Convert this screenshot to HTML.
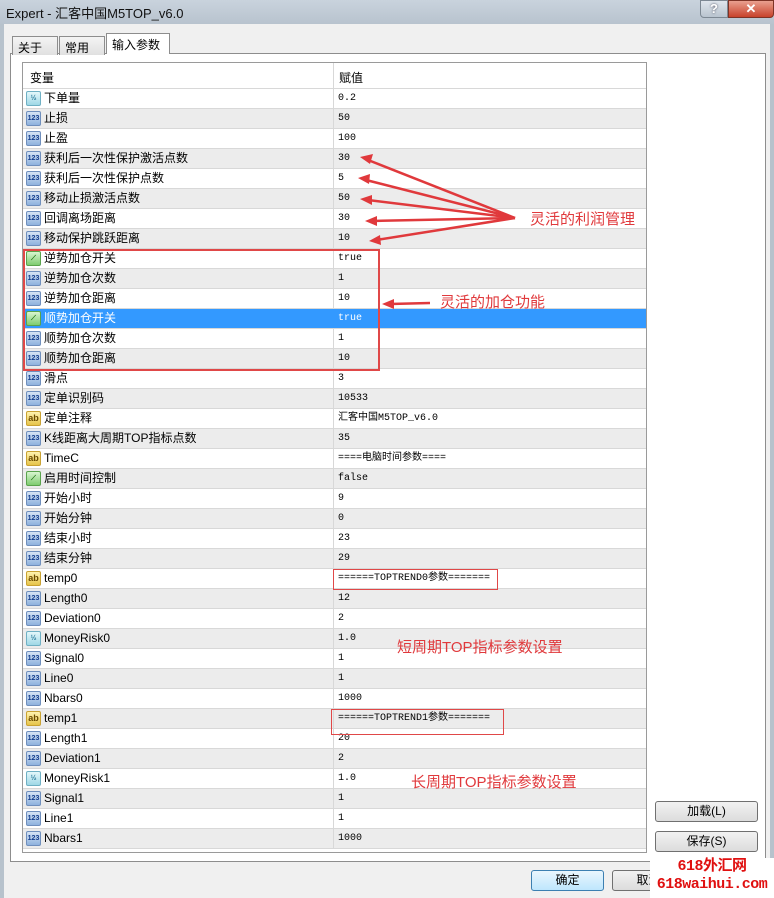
<!DOCTYPE html>
<html><head><meta charset="utf-8"><style>
*{margin:0;padding:0;box-sizing:border-box}
body{width:774px;height:898px;overflow:hidden;background:#f0f0f0;font-family:"Liberation Sans","Noto Sans CJK SC",sans-serif;font-size:12px;position:relative;color:#000}
.title{position:absolute;left:0;top:0;width:774px;height:24px;background:linear-gradient(#c9d3dd,#b8c3ce);font-size:13px;padding:3px 0 0 6px;color:#111}
.frame{position:absolute;left:0;top:24px;width:774px;height:874px;border-left:4px solid #b7c2cc;border-right:4px solid #b7c2cc;background:#f0f0f0}
.tab{position:absolute;top:35px;height:19px;border:1px solid #8d8d8d;border-bottom:none;background:linear-gradient(#f4f4f4,#e0e0e0);font-size:12px;padding:2px 5px}
.panel{position:absolute;left:10px;top:53px;width:756px;height:809px;border:1px solid #8d8d8d;background:#fff}
.list{position:absolute;left:22px;top:62px;width:625px;height:791px;border:1px solid #9a9a9a;background:#fff;overflow:hidden}
.row{position:absolute;left:0;width:623px;height:20px;border-bottom:1px solid #d8d8d8;font-size:12px;line-height:19px}
.row.g{background:#ececec}
.row.sel{background:#3399ff;color:#fff}
.row .n{position:absolute;left:21px;top:0;white-space:nowrap}
.row .v{position:absolute;left:315px;top:0;font-family:"Liberation Mono","Noto Sans CJK SC",monospace;font-size:10px;white-space:nowrap}
.row .sep{position:absolute;left:310px;top:0;width:1px;height:20px;background:#d8d8d8}
.ic{position:absolute;left:3px;top:2px;width:15px;height:15px;border-radius:2px;font-size:7px;font-weight:bold;text-align:center;line-height:13px;font-family:"Liberation Sans",sans-serif}
.i1{background:linear-gradient(#d6e4f5,#8fb2de);color:#123c8c;border:1px solid #6f8fbd}
.i2{background:linear-gradient(#e4f7fb,#9fd8e6);color:#2a7b9a;border:1px solid #6fb0c4}
.ia{background:linear-gradient(#fff3b0,#e6c44a);color:#6b4b00;border:1px solid #c9a233;font-size:9px}
.ib{background:linear-gradient(#d8f5d0,#7fcc70);color:#1d6b12;border:1px solid #5aa34c}
.hdr{position:absolute;left:0;top:0;width:623px;height:26px;border-bottom:1px solid #d8d8d8;background:#fff}
.btn{position:absolute;height:21px;border:1px solid #707070;border-radius:3px;background:linear-gradient(#f2f2f2,#dcdcdc);text-align:center;font-size:12px;line-height:19px}
.red{color:#e0393c;position:absolute;font-size:15px;white-space:nowrap}
.box{position:absolute;border:2px solid #e04848}
</style></head><body>
<div class="title">Expert - 汇客中国M5TOP_v6.0</div>
<div style="position:absolute;left:700px;top:0;width:28px;height:18px;background:linear-gradient(#dfe5ec,#b9c4cf);border:1px solid #7d8893;border-radius:0 0 0 4px;text-align:center;font-weight:bold;color:#fff;font-size:13px;text-shadow:0 0 2px #445">?</div>
<div style="position:absolute;left:728px;top:0;width:46px;height:18px;background:linear-gradient(#e9a08f,#c8422b);border:1px solid #7d3326;border-radius:0 0 4px 0;text-align:center;font-weight:bold;color:#fff;font-size:13px">✕</div>
<div class="frame"></div>
<div class="panel"></div>
<div class="tab" style="left:12px;top:36px;width:46px">关于</div>
<div class="tab" style="left:59px;top:36px;width:46px">常用</div>
<div class="tab" style="left:106px;top:33px;width:64px;height:21px;background:#fff;z-index:2">输入参数</div>
<div class="list">
<div class="hdr"><span style="position:absolute;left:7px;top:6px">变量</span><span style="position:absolute;left:310px;top:0;width:1px;height:26px;background:#d8d8d8"></span><span style="position:absolute;left:316px;top:6px">赋值</span></div>
<div class="row" style="top:26px"><span class="ic i2">½</span><span class="n">下单量</span><span class="sep"></span><span class="v">0.2</span></div>
<div class="row g" style="top:46px"><span class="ic i1">123</span><span class="n">止损</span><span class="sep"></span><span class="v">50</span></div>
<div class="row" style="top:66px"><span class="ic i1">123</span><span class="n">止盈</span><span class="sep"></span><span class="v">100</span></div>
<div class="row g" style="top:86px"><span class="ic i1">123</span><span class="n">获利后一次性保护激活点数</span><span class="sep"></span><span class="v">30</span></div>
<div class="row" style="top:106px"><span class="ic i1">123</span><span class="n">获利后一次性保护点数</span><span class="sep"></span><span class="v">5</span></div>
<div class="row g" style="top:126px"><span class="ic i1">123</span><span class="n">移动止损激活点数</span><span class="sep"></span><span class="v">50</span></div>
<div class="row" style="top:146px"><span class="ic i1">123</span><span class="n">回调离场距离</span><span class="sep"></span><span class="v">30</span></div>
<div class="row g" style="top:166px"><span class="ic i1">123</span><span class="n">移动保护跳跃距离</span><span class="sep"></span><span class="v">10</span></div>
<div class="row" style="top:186px"><span class="ic ib">⟋</span><span class="n">逆势加仓开关</span><span class="sep"></span><span class="v">true</span></div>
<div class="row g" style="top:206px"><span class="ic i1">123</span><span class="n">逆势加仓次数</span><span class="sep"></span><span class="v">1</span></div>
<div class="row" style="top:226px"><span class="ic i1">123</span><span class="n">逆势加仓距离</span><span class="sep"></span><span class="v">10</span></div>
<div class="row sel" style="top:246px"><span class="ic ib">⟋</span><span class="n">顺势加仓开关</span><span class="v">true</span></div>
<div class="row" style="top:266px"><span class="ic i1">123</span><span class="n">顺势加仓次数</span><span class="sep"></span><span class="v">1</span></div>
<div class="row g" style="top:286px"><span class="ic i1">123</span><span class="n">顺势加仓距离</span><span class="sep"></span><span class="v">10</span></div>
<div class="row" style="top:306px"><span class="ic i1">123</span><span class="n">滑点</span><span class="sep"></span><span class="v">3</span></div>
<div class="row g" style="top:326px"><span class="ic i1">123</span><span class="n">定单识别码</span><span class="sep"></span><span class="v">10533</span></div>
<div class="row" style="top:346px"><span class="ic ia">ab</span><span class="n">定单注释</span><span class="sep"></span><span class="v">汇客中国M5TOP_v6.0</span></div>
<div class="row g" style="top:366px"><span class="ic i1">123</span><span class="n">K线距离大周期TOP指标点数</span><span class="sep"></span><span class="v">35</span></div>
<div class="row" style="top:386px"><span class="ic ia">ab</span><span class="n">TimeC</span><span class="sep"></span><span class="v">====电脑时间参数====</span></div>
<div class="row g" style="top:406px"><span class="ic ib">⟋</span><span class="n">启用时间控制</span><span class="sep"></span><span class="v">false</span></div>
<div class="row" style="top:426px"><span class="ic i1">123</span><span class="n">开始小时</span><span class="sep"></span><span class="v">9</span></div>
<div class="row g" style="top:446px"><span class="ic i1">123</span><span class="n">开始分钟</span><span class="sep"></span><span class="v">0</span></div>
<div class="row" style="top:466px"><span class="ic i1">123</span><span class="n">结束小时</span><span class="sep"></span><span class="v">23</span></div>
<div class="row g" style="top:486px"><span class="ic i1">123</span><span class="n">结束分钟</span><span class="sep"></span><span class="v">29</span></div>
<div class="row" style="top:506px"><span class="ic ia">ab</span><span class="n">temp0</span><span class="sep"></span><span class="v">======TOPTREND0参数=======</span></div>
<div class="row g" style="top:526px"><span class="ic i1">123</span><span class="n">Length0</span><span class="sep"></span><span class="v">12</span></div>
<div class="row" style="top:546px"><span class="ic i1">123</span><span class="n">Deviation0</span><span class="sep"></span><span class="v">2</span></div>
<div class="row g" style="top:566px"><span class="ic i2">½</span><span class="n">MoneyRisk0</span><span class="sep"></span><span class="v">1.0</span></div>
<div class="row" style="top:586px"><span class="ic i1">123</span><span class="n">Signal0</span><span class="sep"></span><span class="v">1</span></div>
<div class="row g" style="top:606px"><span class="ic i1">123</span><span class="n">Line0</span><span class="sep"></span><span class="v">1</span></div>
<div class="row" style="top:626px"><span class="ic i1">123</span><span class="n">Nbars0</span><span class="sep"></span><span class="v">1000</span></div>
<div class="row g" style="top:646px"><span class="ic ia">ab</span><span class="n">temp1</span><span class="sep"></span><span class="v">======TOPTREND1参数=======</span></div>
<div class="row" style="top:666px"><span class="ic i1">123</span><span class="n">Length1</span><span class="sep"></span><span class="v">20</span></div>
<div class="row g" style="top:686px"><span class="ic i1">123</span><span class="n">Deviation1</span><span class="sep"></span><span class="v">2</span></div>
<div class="row" style="top:706px"><span class="ic i2">½</span><span class="n">MoneyRisk1</span><span class="sep"></span><span class="v">1.0</span></div>
<div class="row g" style="top:726px"><span class="ic i1">123</span><span class="n">Signal1</span><span class="sep"></span><span class="v">1</span></div>
<div class="row" style="top:746px"><span class="ic i1">123</span><span class="n">Line1</span><span class="sep"></span><span class="v">1</span></div>
<div class="row g" style="top:766px"><span class="ic i1">123</span><span class="n">Nbars1</span><span class="sep"></span><span class="v">1000</span></div>
</div>
<div class="box" style="left:23px;top:249px;width:357px;height:122px"></div>
<div class="box" style="left:333px;top:569px;width:165px;height:21px;border-width:1px"></div>
<div class="box" style="left:331px;top:709px;width:173px;height:26px;border-width:1px"></div>
<svg style="position:absolute;left:0;top:0" width="774" height="898">
<g stroke="#e0393c" stroke-width="2.5" fill="#e0393c">
<line x1="515" y1="218" x2="368" y2="160"/>
<line x1="515" y1="218" x2="366" y2="180"/>
<line x1="515" y1="218" x2="368" y2="200"/>
<line x1="515" y1="218" x2="372" y2="221"/>
<line x1="515" y1="218" x2="376" y2="240"/>
<line x1="430" y1="303" x2="390" y2="304"/>
</g>
<g fill="#e0393c">
<path d="M360,157 L373,154 L370,164 z"/>
<path d="M358,178 L370,174 L369,184 z"/>
<path d="M360,199 L372,195 L372,205 z"/>
<path d="M365,221 L377,216 L377,226 z"/>
<path d="M369,241 L380,235 L381,245 z"/>
<path d="M382,304 L394,299 L394,309 z"/>
</g></svg>
<div class="red" style="left:530px;top:208px">灵活的利润管理</div>
<div class="red" style="left:440px;top:291px">灵活的加仓功能</div>
<div class="red" style="left:397px;top:636px">短周期TOP指标参数设置</div>
<div class="red" style="left:411px;top:771px">长周期TOP指标参数设置</div>
<div class="btn" style="left:655px;top:801px;width:103px">加载(L)</div>
<div class="btn" style="left:655px;top:831px;width:103px">保存(S)</div>
<div class="btn" style="left:531px;top:870px;width:73px;border-color:#3c7fb1;background:linear-gradient(#eaf6fd,#bee6fd)">确定</div>
<div class="btn" style="left:612px;top:870px;width:73px">取消</div>
<div style="position:absolute;left:650px;top:858px;width:124px;height:40px;background:#fff"></div>
<div style="position:absolute;left:650px;top:858px;width:124px;text-align:center;color:#e01010;font-weight:bold;font-size:15px;line-height:18px;font-family:'Liberation Mono','Noto Sans CJK SC',monospace;letter-spacing:-0.5px">618外汇网<br>618waihui.com</div>
</body></html>
